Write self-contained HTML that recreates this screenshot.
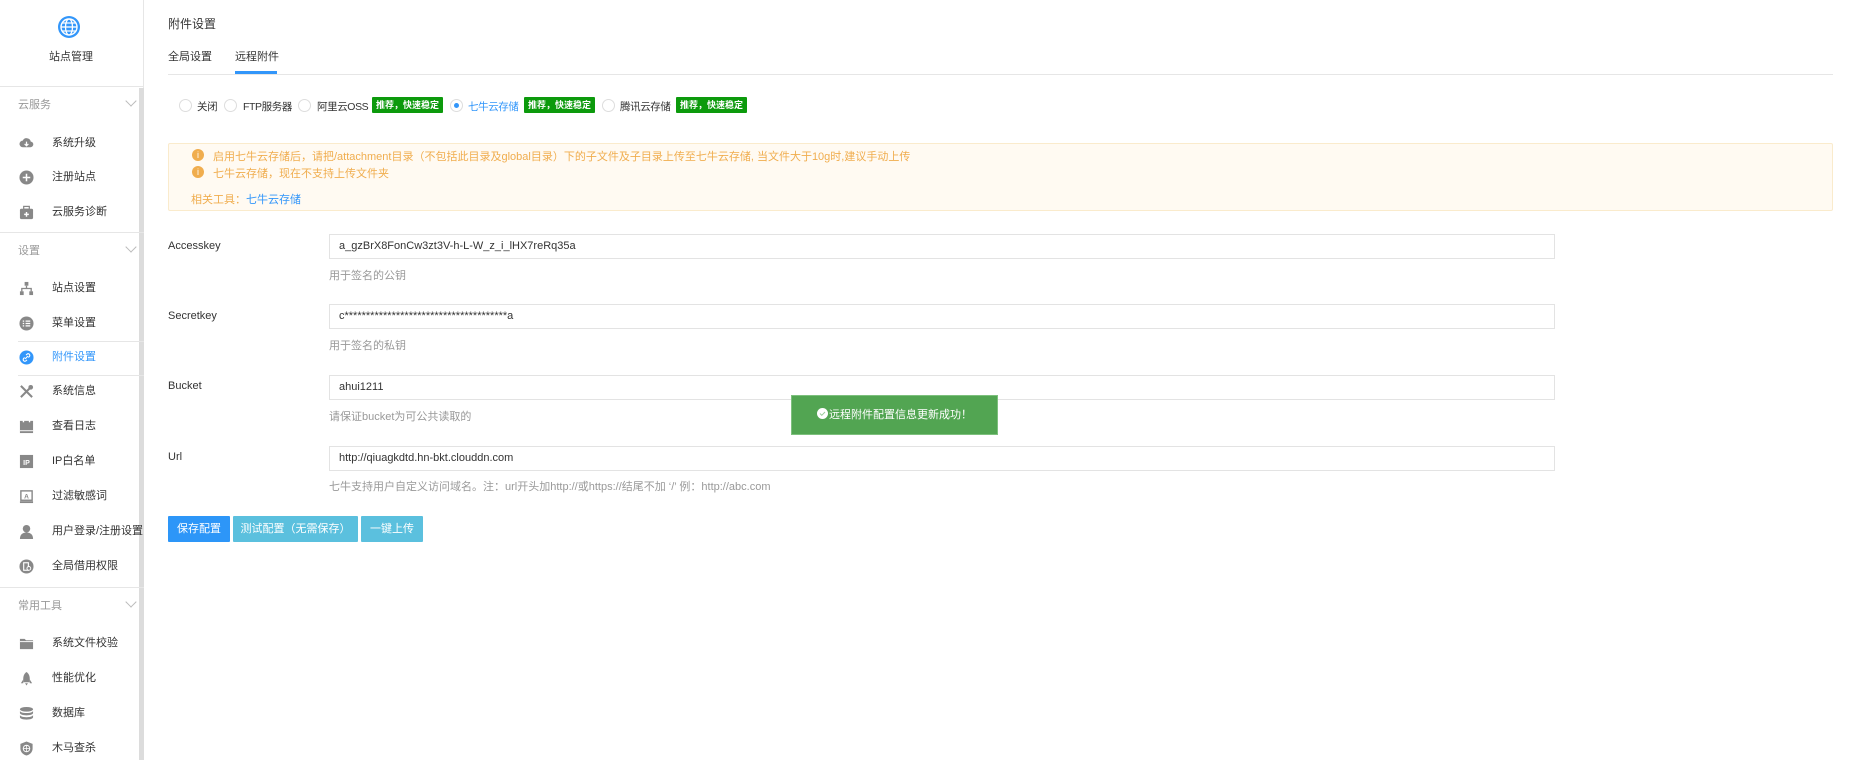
<!DOCTYPE html>
<html><head><meta charset="utf-8"><style>
*{margin:0;padding:0;box-sizing:border-box}
body{width:1849px;height:760px;background:#fff;font-family:"Liberation Sans","Noto Sans CJK SC",sans-serif;font-size:11px;color:#333;position:relative;overflow:hidden}
.a{position:absolute;white-space:nowrap}
.sb{position:absolute;left:0;top:0;width:144px;height:760px;border-right:1px solid #e6e6e6}
.scroll{position:absolute;left:139px;top:88px;width:5px;height:672px;background:#dcdcdc}
.hr{position:absolute;height:1px;background:#e6e6e6}
.grp{position:absolute;left:18px;color:#999;font-size:11px;line-height:14px}
.chev{position:absolute;left:127px;width:8px;height:8px;border-right:1px solid #bbb;border-bottom:1px solid #bbb;transform:rotate(45deg)}
.it{position:absolute;left:52px;font-size:11px;line-height:14px;color:#333}
.ic{position:absolute;left:19px;width:15px;height:15px}
.rad{position:absolute;top:99px;width:13px;height:13px;border:1px solid #ddd;border-radius:50%;background:#fff}
.rl{position:absolute;top:99px;font-size:10.5px;letter-spacing:-0.4px;white-space:nowrap}
.badge{position:absolute;top:97px;height:16px;width:71px;background:#0c9a0c;color:#fff;font-size:9px;font-weight:bold;line-height:16px;text-align:center;border-radius:1px}
.lbl{position:absolute;left:168px;font-size:11px;color:#333}
.inp{position:absolute;left:329px;width:1226px;height:25px;border:1px solid #e3e3e3;font-size:11px;line-height:23px;padding-left:9px;color:#333}
.help{position:absolute;left:329px;font-size:11px;color:#999}
.btn{position:absolute;top:516px;height:26px;color:#fff;font-size:11px;line-height:26px;text-align:center;border-radius:1px}
</style></head><body>
<div class="sb"></div>
<div class="scroll"></div>
<svg class="a" style="left:57px;top:15px" width="24" height="24" viewBox="0 0 24 24"><circle cx="12" cy="12" r="11" fill="#3296fa"/><circle cx="12" cy="12" r="8" fill="none" stroke="#fff" stroke-width="1.4"/><ellipse cx="12" cy="12" rx="3.5" ry="8" fill="none" stroke="#fff" stroke-width="1.3"/><line x1="4" y1="12" x2="20" y2="12" stroke="#fff" stroke-width="1.3"/><line x1="5" y1="8" x2="19" y2="8" stroke="#fff" stroke-width="1.2"/><line x1="5" y1="16" x2="19" y2="16" stroke="#fff" stroke-width="1.2"/></svg>
<div class="a" style="left:49px;top:48px;font-size:11px">站点管理</div>
<div class="hr" style="left:0;top:86px;width:144px"></div>

<div class="grp" style="top:98px">云服务</div><div class="chev" style="top:97px"></div>
<svg class="ic" style="top:135px" viewBox="0 0 16 16"><path d="M4 13a3.5 3.5 0 0 1 0-7 4.5 4.5 0 0 1 8.5 1A3 3 0 0 1 12 13z" fill="#888"/><path d="M8 7v4M6 9.5l2 2 2-2" stroke="#fff" stroke-width="1.3" fill="none"/></svg>
<div class="it" style="top:136px">系统升级</div>
<svg class="ic" style="top:170px" viewBox="0 0 16 16"><circle cx="8" cy="8" r="7.5" fill="#888"/><path d="M8 4v8M4 8h8" stroke="#fff" stroke-width="1.6"/></svg>
<div class="it" style="top:170px">注册站点</div>
<svg class="ic" style="top:205px" viewBox="0 0 16 16"><rect x="1" y="4" width="14" height="11" rx="1.5" fill="#888"/><rect x="5" y="1.5" width="6" height="3" fill="none" stroke="#888" stroke-width="1.3"/><path d="M8 7.5v5M5.5 10h5" stroke="#fff" stroke-width="1.5"/></svg>
<div class="it" style="top:205px">云服务诊断</div>
<div class="hr" style="left:0;top:232px;width:144px"></div>

<div class="grp" style="top:244px">设置</div><div class="chev" style="top:243px"></div>
<svg class="ic" style="top:281px" viewBox="0 0 16 16"><rect x="6" y="1" width="4" height="4" fill="#888"/><rect x="1" y="11" width="4" height="4" fill="#888"/><rect x="11" y="11" width="4" height="4" fill="#888"/><path d="M8 5v3M3 11V8h10v3" stroke="#888" stroke-width="1.4" fill="none"/></svg>
<div class="it" style="top:281px">站点设置</div>
<svg class="ic" style="top:316px" viewBox="0 0 16 16"><circle cx="8" cy="8" r="7.5" fill="#888"/><path d="M4 5.5h1.5M7 5.5h5M4 8h1.5M7 8h5M4 10.5h1.5M7 10.5h5" stroke="#fff" stroke-width="1.3"/></svg>
<div class="it" style="top:316px">菜单设置</div>
<div class="hr" style="left:18px;top:341px;width:126px"></div>
<svg class="ic" style="top:350px" viewBox="0 0 16 16"><circle cx="8" cy="8" r="7.5" fill="#3296fa"/><path d="M6.5 9.5l3-3M7.5 5.5l1-1a1.6 1.6 0 0 1 2.5 2.5l-1 1M8.5 10.5l-1 1a1.6 1.6 0 0 1-2.5-2.5l1-1" stroke="#fff" stroke-width="1.2" fill="none"/></svg>
<div class="it" style="top:350px;color:#3296fa">附件设置</div>
<div class="hr" style="left:18px;top:375px;width:126px"></div>
<svg class="ic" style="top:384px" viewBox="0 0 16 16"><path d="M2 2l12 12M14 2L2 14" stroke="#888" stroke-width="2.2"/><circle cx="12.5" cy="3.5" r="2.5" fill="#888"/></svg>
<div class="it" style="top:384px">系统信息</div>
<svg class="ic" style="top:419px" viewBox="0 0 16 16"><rect x="1" y="2" width="14" height="13" fill="#888"/><rect x="4" y="0.5" width="1.5" height="3" fill="#fff"/><rect x="10.5" y="0.5" width="1.5" height="3" fill="#fff"/><path d="M1 12.5h14" stroke="#fff" stroke-width="1"/></svg>
<div class="it" style="top:419px">查看日志</div>
<svg class="ic" style="top:454px" viewBox="0 0 16 16"><rect x="1" y="1" width="14" height="14" fill="#888"/><text x="8" y="11.5" font-size="7.5" font-weight="bold" fill="#fff" text-anchor="middle" font-family="Liberation Sans">IP</text></svg>
<div class="it" style="top:454px">IP白名单</div>
<svg class="ic" style="top:489px" viewBox="0 0 16 16"><rect x="2" y="2" width="12" height="10" fill="none" stroke="#888" stroke-width="1.5"/><path d="M1 14h14" stroke="#888" stroke-width="2"/><text x="8" y="10" font-size="7" font-weight="bold" fill="#888" text-anchor="middle" font-family="Liberation Sans">A</text></svg>
<div class="it" style="top:489px">过滤敏感词</div>
<svg class="ic" style="top:524px" viewBox="0 0 16 16"><circle cx="8" cy="5" r="4" fill="#888"/><path d="M1 16c0-5 3-7 7-7s7 2 7 7z" fill="#888"/></svg>
<div class="it" style="top:524px">用户登录/注册设置</div>
<svg class="ic" style="top:559px" viewBox="0 0 16 16"><circle cx="8" cy="8" r="7.5" fill="#888"/><rect x="5" y="4" width="5" height="8" fill="none" stroke="#fff" stroke-width="1.2"/><circle cx="10.5" cy="10" r="2" fill="#888" stroke="#fff" stroke-width="1"/></svg>
<div class="it" style="top:559px">全局借用权限</div>
<div class="hr" style="left:0;top:587px;width:144px"></div>

<div class="grp" style="top:599px">常用工具</div><div class="chev" style="top:598px"></div>
<svg class="ic" style="top:636px" viewBox="0 0 16 16"><path d="M1 3h5l1.5 1.5H15V14H1z" fill="#888"/><path d="M1 6h14" stroke="#fff" stroke-width="1"/></svg>
<div class="it" style="top:636px">系统文件校验</div>
<svg class="ic" style="top:671px" viewBox="0 0 16 16"><path d="M8 1c3 2 3.5 5 3.5 8v3h-7V9c0-3 .5-6 3.5-8z" fill="#888"/><path d="M4.5 9L2 13h2.5zM11.5 9L14 13h-2.5zM6.5 13h3l-1.5 2.5z" fill="#888"/></svg>
<div class="it" style="top:671px">性能优化</div>
<svg class="ic" style="top:706px" viewBox="0 0 16 16"><ellipse cx="8" cy="3.5" rx="7" ry="2.5" fill="#888"/><path d="M1 5v2.5c0 1.4 3 2.5 7 2.5s7-1.1 7-2.5V5c0 1.4-3 2.5-7 2.5S1 6.4 1 5zM1 9.5V12c0 1.4 3 2.5 7 2.5s7-1.1 7-2.5V9.5c0 1.4-3 2.5-7 2.5S1 10.9 1 9.5z" fill="#888"/></svg>
<div class="it" style="top:706px">数据库</div>
<svg class="ic" style="top:741px" viewBox="0 0 16 16"><path d="M8 .5L14.5 3v5c0 4-3 6.5-6.5 7.5C4.5 14.5 1.5 12 1.5 8V3z" fill="#888"/><circle cx="8" cy="8" r="3.5" fill="none" stroke="#fff" stroke-width="1"/><path d="M8 4.5v7M4.5 8h7" stroke="#fff" stroke-width=".8"/></svg>
<div class="it" style="top:741px">木马查杀</div>

<!-- main -->
<div class="a" style="left:168px;top:15px;font-size:12px">附件设置</div>
<div class="a" style="left:168px;top:48px;font-size:11px">全局设置</div>
<div class="a" style="left:235px;top:48px;font-size:11px">远程附件</div>
<div class="hr" style="left:168px;top:74px;width:1665px"></div>
<div class="a" style="left:235px;top:71px;width:42px;height:3px;background:#3296fa"></div>

<div class="rad" style="left:179px"></div><div class="rl" style="left:197px">关闭</div>
<div class="rad" style="left:224px"></div><div class="rl" style="left:243px">FTP服务器</div>
<div class="rad" style="left:298px"></div><div class="rl" style="left:317px">阿里云OSS</div>
<div class="badge" style="left:372px">推荐，快速稳定</div>
<div class="rad" style="left:450px"><div style="position:absolute;left:3px;top:3px;width:5px;height:5px;border-radius:50%;background:#3296fa"></div></div><div class="rl" style="left:468px;color:#3296fa">七牛云存储</div>
<div class="badge" style="left:524px">推荐，快速稳定</div>
<div class="rad" style="left:602px"></div><div class="rl" style="left:620px">腾讯云存储</div>
<div class="badge" style="left:676px">推荐，快速稳定</div>

<div class="a" style="left:168px;top:143px;width:1665px;height:68px;background:#fffaf2;border:1px solid #faebcc;border-radius:2px"></div>
<div class="a" style="left:192px;top:149px;width:12px;height:12px;border-radius:50%;background:#f0ad4e;color:#fff;font-size:9px;line-height:12px;text-align:center">i</div>
<div class="a" style="left:213px;top:148px;color:#f0ad4e">启用七牛云存储后，请把/attachment目录（不包括此目录及global目录）下的子文件及子目录上传至七牛云存储, 当文件大于10g时,建议手动上传</div>
<div class="a" style="left:192px;top:166px;width:12px;height:12px;border-radius:50%;background:#f0ad4e;color:#fff;font-size:9px;line-height:12px;text-align:center">i</div>
<div class="a" style="left:213px;top:165px;color:#f0ad4e">七牛云存储，现在不支持上传文件夹</div>
<div class="a" style="left:191px;top:191px;color:#f0ad4e">相关工具：<span style="color:#3296fa">七牛云存储</span></div>

<div class="lbl" style="top:240px">Accesskey</div>
<div class="inp" style="top:234px">a_gzBrX8FonCw3zt3V-h-L-W_z_i_lHX7reRq35a</div>
<div class="help" style="top:267px">用于签名的公钥</div>
<div class="lbl" style="top:310px">Secretkey</div>
<div class="inp" style="top:304px">c**************************************a</div>
<div class="help" style="top:337px">用于签名的私钥</div>
<div class="lbl" style="top:380px">Bucket</div>
<div class="inp" style="top:375px">ahui1211</div>
<div class="help" style="top:408px">请保证bucket为可公共读取的</div>
<div class="lbl" style="top:451px">Url</div>
<div class="inp" style="top:446px">http://qiuagkdtd.hn-bkt.clouddn.com</div>
<div class="help" style="top:478px">七牛支持用户自定义访问域名。注：url开头加http://或https://结尾不加 ‘/’ 例：http://abc.com</div>

<div class="btn" style="left:168px;width:62px;background:#2d96f8">保存配置</div>
<div class="btn" style="left:233px;width:125px;background:#5bc0de">测试配置（无需保存）</div>
<div class="btn" style="left:361px;width:62px;background:#5bc0de">一键上传</div>

<div class="a" style="left:791px;top:395px;width:207px;height:40px;background:#52a552;border:1px solid #7dc07d;color:#fff;font-size:11px;line-height:38px;text-align:center"><svg width="11" height="11" viewBox="0 0 11 11" style="vertical-align:-1px;margin-right:1px"><circle cx="5.5" cy="5.5" r="5.5" fill="#fff"/><path d="M3 5.5l1.8 1.8L8 4" stroke="#9c9" stroke-width="1" fill="none"/></svg>远程附件配置信息更新成功！</div>
</body></html>
